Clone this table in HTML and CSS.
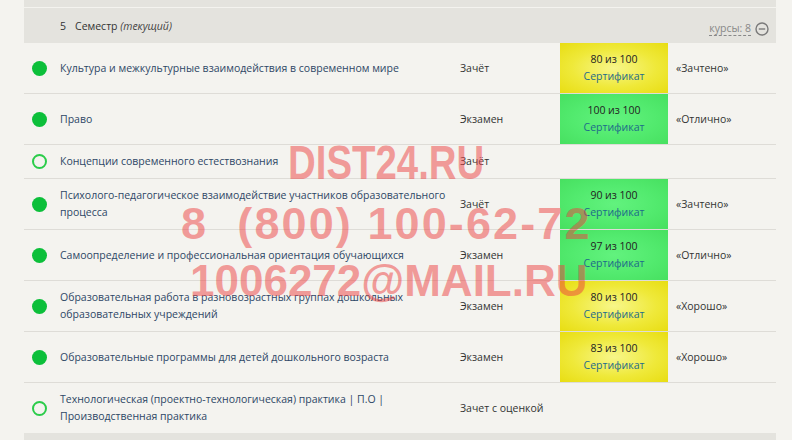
FILE: index.html
```html
<!DOCTYPE html>
<html lang="ru">
<head>
<meta charset="utf-8">
<title>Семестр</title>
<link rel="stylesheet" href="styles.css">
</head>
<body>
<div class="wrap">
  <div class="topstrip"></div>
  <div class="sem-head">
    <span class="num">5</span>
    <span class="sem">Семестр <i>(текущий)</i></span>
    <span class="courses"><span class="cnt">курсы: 8</span>
      <svg class="minus" width="14" height="14" viewBox="0 0 14 14"><circle cx="7" cy="7" r="6" fill="none" stroke="#7a7a7a" stroke-width="1.4"/><line x1="3.8" y1="7" x2="10.2" y2="7" stroke="#7a7a7a" stroke-width="1.4"/></svg>
    </span>
  </div>
  <div class="rows">
    <div class="row">
      <div class="st"><span class="dot full"></span></div>
      <div class="name"><a href="#">Культура и межкультурные взаимодействия в современном мире</a></div>
      <div class="type">Зачёт</div>
      <div class="score yellow"><span>80 из 100</span><a href="#">Сертификат</a></div>
      <div class="res">«Зачтено»</div>
    </div>
    <div class="row">
      <div class="st"><span class="dot full"></span></div>
      <div class="name"><a href="#">Право</a></div>
      <div class="type">Экзамен</div>
      <div class="score green"><span>100 из 100</span><a href="#">Сертификат</a></div>
      <div class="res">«Отлично»</div>
    </div>
    <div class="row">
      <div class="st"><span class="dot empty"></span></div>
      <div class="name"><a href="#">Концепции современного естествознания</a></div>
      <div class="type">Зачёт</div>
      <div class="score"></div>
      <div class="res"></div>
    </div>
    <div class="row">
      <div class="st"><span class="dot full"></span></div>
      <div class="name"><a href="#">Психолого-педагогическое взаимодействие участников образовательного процесса</a></div>
      <div class="type">Зачёт</div>
      <div class="score green"><span>90 из 100</span><a href="#">Сертификат</a></div>
      <div class="res">«Зачтено»</div>
    </div>
    <div class="row">
      <div class="st"><span class="dot full"></span></div>
      <div class="name"><a href="#">Самоопределение и профессиональная ориентация обучающихся</a></div>
      <div class="type">Экзамен</div>
      <div class="score green"><span>97 из 100</span><a href="#">Сертификат</a></div>
      <div class="res">«Отлично»</div>
    </div>
    <div class="row">
      <div class="st"><span class="dot full"></span></div>
      <div class="name"><a href="#">Образовательная работа в разновозрастных группах дошкольных образовательных учреждений</a></div>
      <div class="type">Экзамен</div>
      <div class="score yellow"><span>80 из 100</span><a href="#">Сертификат</a></div>
      <div class="res">«Хорошо»</div>
    </div>
    <div class="row">
      <div class="st"><span class="dot full"></span></div>
      <div class="name"><a href="#">Образовательные программы для детей дошкольного возраста</a></div>
      <div class="type">Экзамен</div>
      <div class="score yellow"><span>83 из 100</span><a href="#">Сертификат</a></div>
      <div class="res">«Хорошо»</div>
    </div>
    <div class="row last">
      <div class="st"><span class="dot empty"></span></div>
      <div class="name"><a href="#">Технологическая (проектно-технологическая) практика | П.О | Производственная практика</a></div>
      <div class="type">Зачет с оценкой</div>
      <div class="score"></div>
      <div class="res"></div>
    </div>
  </div>
  <div class="footer"></div>
  <div class="wm wm1">DIST24.RU</div>
  <div class="wm wm2">8&nbsp;&nbsp;(800) 100-62-72</div>
  <div class="wm wm3">1006272@MAIL.RU</div>
</div>
</body>
</html>
```

FILE: styles.css
```css
html, body {
  margin: 0;
  padding: 0;
  background: #f4f3ef;
  font-family: "Open Sans", "Noto Sans", sans-serif;
  font-size: 10.5px;
  color: #333;
}
.wrap {
  position: relative;
  margin: 0 16px 0 24px;
  height: 440px;
  overflow: hidden;
}
.topstrip {
  height: 7px;
  background: #e4e3de;
  border-bottom: 1px solid #f4f3ef;
}
.sem-head {
  height: 35px;
  background: #e4e3de;
  display: flex;
  align-items: center;
  padding: 0 7px 0 36px;
  color: #333;
}
.sem-head .num { margin-right: 9px; }
.sem-head i { color: #444; }
.courses {
  margin-left: auto;
  display: flex;
  align-items: center;
  gap: 4px;
  padding-top: 6px;
}
.cnt {
  color: #888;
  border-bottom: 1px dashed #888;
  line-height: 13px;
}
.minus { display: block; }
.row {
  display: grid;
  grid-template-columns: 36px 400px 100px 108px 1fr;
  border-bottom: 1px solid #dedcd7;
  min-height: 33px;
}
.row.last { border-bottom: none; }
.row > div {
  display: flex;
  align-items: center;
  line-height: 17px;
}
.st { padding-left: 8px; }
.dot {
  width: 15px;
  height: 15px;
  border-radius: 50%;
  box-sizing: border-box;
}
.dot.full { background: #0cbf3a; }
.dot.empty { border: 2px solid #2bcc4a; }
.name { padding: 8px 8px 8px 0; }
.name a { color: #2e4766; text-decoration: none; }
.type { padding: 8px 0; }
.score {
  flex-direction: column;
  justify-content: center;
  padding: 8px 0;
  text-align: center;
}
.score span { color: #222; }
.score a { color: #1d6a8a; text-decoration: none; }
.score.yellow { background: radial-gradient(ellipse at center, #f7f68a 0%, #efe93a 55%, #e8dd12 100%); }
.score.green { background: radial-gradient(ellipse at center, #62f27e 0%, #52ea6e 55%, #47e060 100%); }
.res { padding: 8px 0 8px 8px; }
.footer {
  height: 12px;
  background: #e4e3de;
}
.wm {
  position: absolute;
  font-family: "Liberation Sans", Arial, sans-serif;
  font-weight: 700;
  color: rgba(236, 65, 65, 0.5);
  white-space: nowrap;
  line-height: 1;
  transform-origin: left top;
}
.wm1 { left: 264px; top: 139px; font-size: 48px; transform: scaleX(0.8); }
.wm2 { left: 157px; top: 201px; font-size: 45px; letter-spacing: 2.1px; }
.wm3 { left: 166px; top: 259px; font-size: 44px; letter-spacing: 0px; }
```
